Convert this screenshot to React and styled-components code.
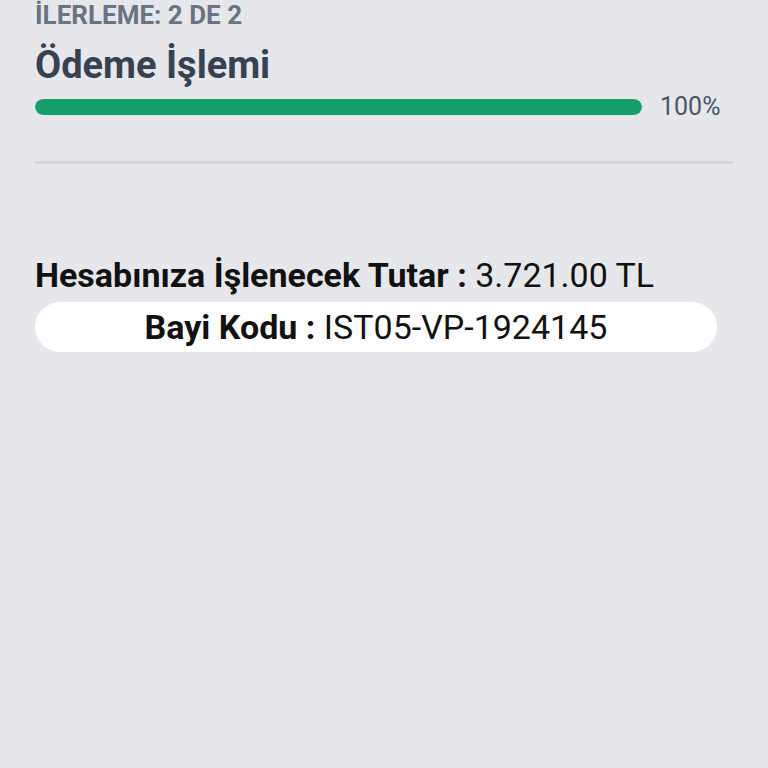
import React from "react";
import styled, { createGlobalStyle } from "styled-components";

const GlobalStyle = createGlobalStyle`
  html, body {
    margin: 0;
    padding: 0;
    background: #e5e7eb;
    font-family: Roboto, "Liberation Sans", sans-serif;
  }
`;

const Page = styled.div`
  min-height: 768px;
  background: #e5e7eb;
  padding: 0 35px;
  box-sizing: border-box;
`;

const StepLabel = styled.div`
  font-size: 26px;
  font-weight: 700;
  line-height: 30px;
  color: #6b7280;
`;

const Title = styled.h1`
  margin: 13px 0 0;
  font-size: 38px;
  font-weight: 700;
  line-height: 44px;
  color: #374151;
`;

const ProgressRow = styled.div`
  display: flex;
  align-items: center;
  gap: 18px;
  margin-top: 10px;
`;

const Track = styled.div`
  flex: 1;
  height: 16px;
  border-radius: 8px;
  background: #d1d5db;
  overflow: hidden;
`;

const Fill = styled.div`
  height: 100%;
  border-radius: 8px;
  background: #169e6b;
`;

const Percent = styled.span`
  width: 73px;
  font-size: 25px;
  line-height: 20px;
  color: #4b5563;
`;

const Divider = styled.hr`
  margin: 44px 0 0;
  border: none;
  height: 3px;
  background: #d4d6da;
`;

const Amount = styled.p`
  margin: 91px 0 0;
  font-size: 34px;
  line-height: 40px;
  color: #111111;
  white-space: nowrap;
`;

const Strong = styled.b`
  font-weight: 700;
`;

const CodePill = styled.div`
  margin: 7px 16px 0 0;
  height: 50px;
  border-radius: 25px;
  background: #ffffff;
  display: flex;
  align-items: center;
  justify-content: center;
  font-size: 34px;
  color: #111111;
  white-space: nowrap;
`;

export default function App() {
  const progress = 100;
  return (
    <>
      <GlobalStyle />
      <Page>
        <StepLabel>İLERLEME: 2 DE 2</StepLabel>
        <Title>Ödeme İşlemi</Title>
        <ProgressRow>
          <Track>
            <Fill style={{ width: `${progress}%` }} />
          </Track>
          <Percent>{progress}%</Percent>
        </ProgressRow>
        <Divider />
        <Amount>
          <Strong>Hesabınıza İşlenecek Tutar :</Strong> 3.721.00 TL
        </Amount>
        <CodePill>
          <span>
            <Strong>Bayi Kodu :</Strong> IST05-VP-1924145
          </span>
        </CodePill>
      </Page>
    </>
  );
}
